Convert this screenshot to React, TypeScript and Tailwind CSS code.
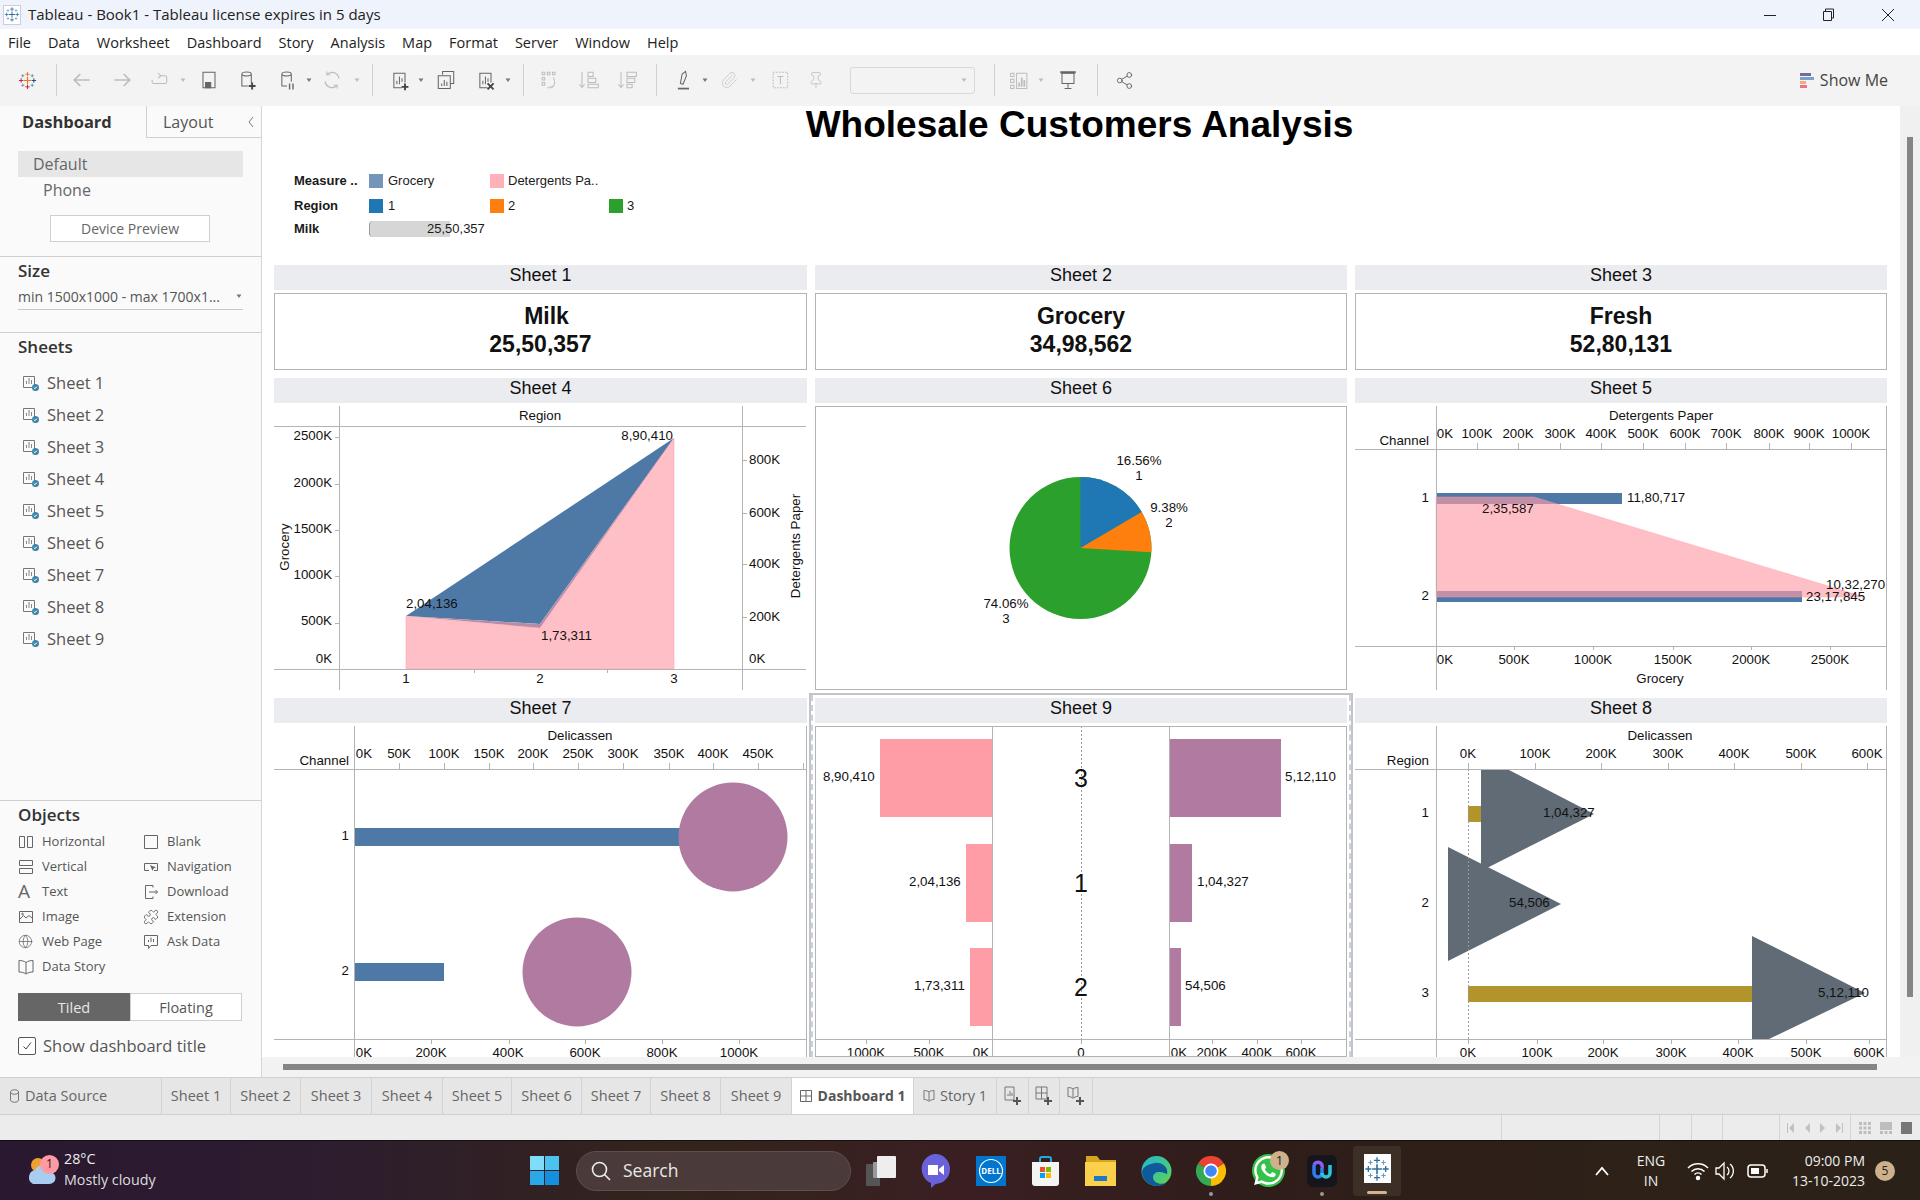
import { ReactNode } from "react";
import { Globe, Paperclip, Pin, Puzzle, Share2 } from "lucide-react";
import { FaWhatsapp } from "react-icons/fa";

const menuItems = ["File", "Data", "Worksheet", "Dashboard", "Story", "Analysis", "Map", "Format", "Server", "Window", "Help"];
const sheetNames = ["Sheet 1", "Sheet 2", "Sheet 3", "Sheet 4", "Sheet 5", "Sheet 6", "Sheet 7", "Sheet 8", "Sheet 9"];
const tabWidths = ["w-[69px]", "w-[70px]", "w-[71px]", "w-[71px]", "w-[69px]", "w-[70px]", "w-[69px]", "w-[70px]", "w-[71px]"];

function Plus({ x, y, r, c, w = 1 }: { x: number; y: number; r: number; c: string; w?: number }) {
  return <path d={`M${x - r} ${y}H${x + r}M${x} ${y - r}V${y + r}`} stroke={c} strokeWidth={w} fill="none" />;
}

function TableauMark({ size, colors }: { size: number; colors: string[] }) {
  return (
    <svg width={size} height={size} viewBox="0 0 24 24">
      <Plus x={12} y={12} r={4.5} c={colors[0]} w={1.5} />
      <Plus x={12} y={4} r={2.8} c={colors[1]} w={1.2} />
      <Plus x={12} y={20} r={2.8} c={colors[2]} w={1.2} />
      <Plus x={4} y={12} r={2.8} c={colors[3]} w={1.2} />
      <Plus x={20} y={12} r={2.8} c={colors[4]} w={1.2} />
      <Plus x={6} y={6} r={2} c={colors[5]} />
      <Plus x={18} y={6} r={2} c={colors[5]} />
      <Plus x={6} y={18} r={2} c={colors[5]} />
      <Plus x={18} y={18} r={2} c={colors[5]} />
    </svg>
  );
}

// toolbar icons, drawn on a 24 grid and shown a bit smaller
const on = "#666";
const off = "#bdbdbd";

function Ico({ children, ml, stroke = on }: { children: ReactNode; ml: string; stroke?: string }) {
  return (
    <svg className={`shrink-0 ${ml}`} width="24" height="24" viewBox="-2 -2 28 28" fill="none" stroke={stroke} strokeWidth="1.2">
      {children}
    </svg>
  );
}

function Caret({ ml, light }: { ml: string; light?: boolean }) {
  return (
    <svg className={`shrink-0 ${ml}`} width="8" height="8" viewBox="0 0 8 8">
      <path d="M1.5 2.5h5L4 6z" fill={light ? "#bdbdbd" : "#777"} />
    </svg>
  );
}

function Sep({ ml }: { ml: string }) {
  return <div className={`h-[32px] w-px shrink-0 bg-[#cfcfcf] ${ml}`} />;
}

function BarsDoc() {
  return (
    <>
      <path d="M19 15V4H6v17h9" />
      <path d="M9.5 17v-4M12.5 17V8M15.5 14V10" />
    </>
  );
}

function Toolbar() {
  return (
    <div className="flex h-[51px] shrink-0 items-center bg-[#f3f3f3] pb-[1px] pl-[15px] pr-[32px]">
      <div className="flex w-[24px] shrink-0 justify-center">
        <TableauMark size={19} colors={["#e8762c", "#e8762c", "#c72035", "#c72035", "#1f457e", "#5b879b"]} />
      </div>
      <Sep ml="ml-[17px]" />
      <Ico ml="ml-[13px]" stroke={off}><path strokeWidth="2" d="M21 12H4M10 5l-7 7 7 7" /></Ico>
      <Ico ml="ml-[16px]" stroke={off}><path strokeWidth="2" d="M3 12h17M14 5l7 7-7 7" /></Ico>
      <Ico ml="ml-[13px]" stroke={off}><path d="M14 7h5a2 2 0 0 1 2 2v5a2 2 0 0 1-2 2H6a2 2 0 0 1-2-2v-2" /><path d="M11 4l3 3-3 3" /></Ico>
      <Caret ml="ml-[8px]" light />
      <Ico ml="ml-[10px]"><path d="M5 3h14v18H5z" /><path d="M8 15h6v6H8z" fill="#666" /></Ico>
      <Ico ml="ml-[14px]"><path d="M6 5c0-3 11-3 11 0v11M6 5v14h7M6 5c0 3 11 3 11 0" /><path strokeWidth="2.2" stroke="#444" d="M14 19h8M18 15v8" /></Ico>
      <Ico ml="ml-[16px]"><path d="M6 5c0-3 11-3 11 0v9M6 5v14h6M6 5c0 3 11 3 11 0" /><path strokeWidth="1.6" d="M15 16v7M19 16v7" /></Ico>
      <Caret ml="ml-[6px]" />
      <Ico ml="ml-[7px]" stroke={off}><path d="M20 10a8 8 0 0 0-14-4M4 14a8 8 0 0 0 14 4" strokeWidth="1.5" /><path d="M6 2v4h4M18 22v-4h-4" /></Ico>
      <Caret ml="ml-[9px]" light />
      <Sep ml="ml-[11px]" />
      <Ico ml="ml-[14px]"><BarsDoc /><path strokeWidth="2.2" stroke="#444" d="M15 20h8M19 16v8" /></Ico>
      <Caret ml="ml-[6px]" />
      <Ico ml="ml-[9px]"><path d="M8 6V2h13v14h-4" /><path d="M3 7h14v15H3z" /><path d="M7 19v-3M10 19v-7M13 19v-5" /></Ico>
      <Ico ml="ml-[15px]"><BarsDoc /><path strokeWidth="2.2" stroke="#444" d="M15 16l7 7M22 16l-7 7" /></Ico>
      <Caret ml="ml-[7px]" />
      <Sep ml="ml-[11px]" />
      <Ico ml="ml-[13px]" stroke={off}><path d="M4 3h3v3H4zM10 3h3v3h-3zM16 3h3v3h-3zM4 9h3v3H4zM4 15h3v3H4zM10 21h3M17 9c3 5 2 9-2 12M13 19l2 2 2-2" /></Ico>
      <Ico ml="ml-[15px]" stroke={off}><path d="M5 3v17M2 17l3 4 3-4M12 3h6v5h-6zM12 10h9v5h-9zM12 17h12v4H12z" /></Ico>
      <Ico ml="ml-[15px]" stroke={off}><path d="M5 3v17M2 17l3 4 3-4M12 3h11v5H12zM12 10h9v5h-9zM12 17h6v4h-6z" /></Ico>
      <Sep ml="ml-[17px]" />
      <Ico ml="ml-[14px]"><path d="M9 16l2-11 4-3 1 5-4 10z" /><path d="M6 22h13" strokeWidth="2" /></Ico>
      <Caret ml="ml-[6px]" />
      <div className="ml-[8px] flex w-[24px] shrink-0 justify-center text-[#c9c9c9]"><Paperclip size={18} strokeWidth={1.2} /></div>
      <Caret ml="ml-[8px]" light />
      <Ico ml="ml-[11px]" stroke={off}><path strokeDasharray="2 1.5" d="M4 3h17v18H4z" /><path d="M9 8h7M12.5 8v9" /></Ico>
      <div className="ml-[12px] flex w-[24px] shrink-0 justify-center text-[#c4c4c4]"><Pin size={18} strokeWidth={1.2} /></div>
      <div className="ml-[22px] flex h-[27px] w-[125px] shrink-0 items-center justify-end rounded-[3px] border border-[#d8d8d8] pr-[6px]">
        <Caret ml="ml-0" light />
      </div>
      <Sep ml="ml-[19px]" />
      <Ico ml="ml-[13px]" stroke={off}><path d="M1 4h4v4H1zM1 11h4v4H1zM1 18h4v4H1zM8 4h12v18H8z" /><path strokeWidth="2" d="M11 20v-5M14 20V9M17 20v-8" /></Ico>
      <Caret ml="ml-[5px]" light />
      <Ico ml="ml-[11px]"><path d="M3 3h18" strokeWidth="2.5" /><path d="M5 4h14v12H5zM12 16v5M8 22h8" /></Ico>
      <Sep ml="ml-[17px]" />
      <div className="ml-[14px] flex w-[24px] shrink-0 justify-center text-[#666]"><Share2 size={19} strokeWidth={1.2} /></div>
      <div className="ml-auto flex items-center gap-[6px]">
        <div className="flex flex-col gap-px">
          <div className="h-[3px] w-[11px] bg-[#7a6a9b]" />
          <div className="h-[3px] w-[14px] bg-[#7aa3cc]" />
          <div className="h-[3px] w-[6px] bg-[#f5a97f]" />
          <div className="h-[3px] w-[7px] bg-[#f0708a]" />
        </div>
        <span className="text-[16px] text-[#444]">Show Me</span>
      </div>
    </div>
  );
}

function SheetIcon() {
  return (
    <svg width="17" height="18" viewBox="0 0 17 18" fill="none">
      <path d="M.5 2.5h11v11H.5z" stroke="#777" />
      <path d="M3.5 10V7M6 10V4M8.5 10V6" stroke="#888" />
      <circle cx="12.5" cy="13.5" r="3.5" fill="#3f84a8" />
      <path d="M10.8 13.5l1.2 1.2 2-2.2" stroke="#fff" />
    </svg>
  );
}

const objStroke = "#666";

function Obj({ icon, label }: { icon: ReactNode; label: string }) {
  return (
    <div className="flex h-[25px] items-center">
      <div className="w-[24px] shrink-0 text-[#666]">{icon}</div>
      <span className="text-[13px] text-[#555]">{label}</span>
    </div>
  );
}

function ObjSvg({ children }: { children: ReactNode }) {
  return (
    <svg width="16" height="16" viewBox="0 0 16 16" fill="none" stroke={objStroke}>
      {children}
    </svg>
  );
}

function Sidebar() {
  return (
    <div className="flex w-[262px] shrink-0 flex-col border-r border-[#d6d6d6] bg-[#fafafa]">
      <div className="flex h-[32px] shrink-0">
        <div className="flex w-[146px] items-center pl-[22px] text-[16.5px] font-bold text-[#333]">Dashboard</div>
        <div className="flex flex-1 items-center justify-between border-b border-l border-[#d0d0d0] pl-[16px] pr-[6px] text-[16px] text-[#555]">
          <span>Layout</span>
          <svg width="8" height="12" viewBox="0 0 8 12" fill="none" stroke="#777"><path d="M6 1L2 6l4 5" /></svg>
        </div>
      </div>
      <div className="mx-[18px] mt-[13px] flex h-[26px] w-[225px] items-center bg-[#e6e6e6] pl-[15px] text-[16px] text-[#666]">Default</div>
      <div className="flex h-[26px] items-center pl-[43px] text-[16px] text-[#666]">Phone</div>
      <div className="ml-[50px] mt-[12px] flex h-[27px] w-[160px] items-center justify-center border border-[#cfcfcf] bg-white text-[14px] text-[#666]">Device Preview</div>
      <div className="mt-[14px] border-t border-[#d0d0d0]" />
      <div className="flex h-[28px] items-center pl-[18px] text-[17px] font-semibold text-[#333]">Size</div>
      <div className="mx-[18px] flex h-[25px] w-[225px] items-center justify-between border-b border-[#c8c8c8] pb-[2px] text-[14px] text-[#555]">
        <span className="whitespace-nowrap">min 1500x1000 - max 1700x1...</span>
        <Caret ml="ml-0" />
      </div>
      <div className="mt-[22px] border-t border-[#d0d0d0]" />
      <div className="flex h-[28px] items-center pl-[18px] text-[17px] font-semibold text-[#333]">Sheets</div>
      <div className="mt-[6px] flex flex-col">
        {sheetNames.map((name) => (
          <div key={name} className="flex h-[32px] items-center gap-[7px] pl-[23px] text-[16.5px] text-[#555]">
            <SheetIcon />
            <span>{name}</span>
          </div>
        ))}
      </div>
      <div className="mt-auto border-t border-[#d0d0d0]" />
      <div className="flex h-[28px] items-center pl-[18px] text-[17px] font-semibold text-[#333]">Objects</div>
      <div className="grid grid-cols-[125px_1fr] pl-[18px]">
        <Obj label="Horizontal" icon={<ObjSvg><path d="M1.5 2.5h5v11h-5zM9.5 2.5h5v11h-5z" /></ObjSvg>} />
        <Obj label="Blank" icon={<ObjSvg><path d="M1.5 1.5h13v13h-13z" /></ObjSvg>} />
        <Obj label="Vertical" icon={<ObjSvg><path d="M1.5 1.5h13v5h-13zM1.5 9.5h13v5h-13z" /></ObjSvg>} />
        <Obj label="Navigation" icon={<ObjSvg><path d="M11 11.5h3.5v-7h-13v7H6" /><path d="M7 6l6 2.5-2.5 1L9.5 12z" fill="#666" stroke="none" /></ObjSvg>} />
        <Obj label="Text" icon={<span className="block text-[19px] leading-none text-[#666]">A</span>} />
        <Obj label="Download" icon={<ObjSvg><path d="M10 3.5V1.5H2.5v13H10v-2" /><path d="M6 8h8.5M12.5 6l2 2-2 2" /></ObjSvg>} />
        <Obj label="Image" icon={<ObjSvg><path d="M1.5 2.5h13v11h-13z" /><path d="M2 10l3.5-3.5L8 9l3-2.5 3 2.5" /><circle cx="4.5" cy="5" r=".8" /></ObjSvg>} />
        <Obj label="Extension" icon={<Puzzle size={16} strokeWidth={1.3} />} />
        <Obj label="Web Page" icon={<Globe size={15} strokeWidth={1.2} />} />
        <Obj label="Ask Data" icon={<ObjSvg><path d="M1.5 1.5h13v10H8l-2.5 3v-3h-4z" /><path d="M5.5 8V6M8 8V3.5M10.5 8V5" /></ObjSvg>} />
        <Obj label="Data Story" icon={<ObjSvg><path d="M8 3.5C6 2 3.5 1.5 1 1.5v11.5c2.5 0 5 .5 7 2 2-1.5 4.500-2 7-2V1.500c-2.500 0-5 .5-7 2zM8 3.500V15" /></ObjSvg>} />
      </div>
      <div className="ml-[18px] mt-[14px] flex h-[28px] w-[224px] text-[14.5px]">
        <div className="flex w-[112px] items-center justify-center bg-[#666] pt-[1px] text-[#e8e8e8]">Tiled</div>
        <div className="flex flex-1 items-center justify-center border border-[#d0d0d0] bg-white pt-[1px] text-[#555]">Floating</div>
      </div>
      <div className="ml-[18px] mt-[16px] mb-[22px] flex h-[18px] items-center gap-[7px]">
        <div className="flex h-[18px] w-[18px] items-center justify-center rounded-[2px] border border-[#555] bg-white">
          <svg width="10" height="10" viewBox="0 0 10 10" fill="none" stroke="#444"><path d="M1.500 5.500l2.500 2.500 5-6.500" /></svg>
        </div>
        <span className="text-[16.5px] text-[#555]">Show dashboard title</span>
      </div>
    </div>
  );
}

// chart helpers, svg coordinates are page coordinates through the viewBox
function T({ x, y, a = "start", s = 13.3, children }: { x: number; y: number; a?: "start" | "middle" | "end"; s?: number; children: ReactNode }) {
  return (
    <text x={x} y={y - 0.4} textAnchor={a} dominantBaseline="central" fontSize={s} fill="#111">
      {children}
    </text>
  );
}

function VT({ x, y, children }: { x: number; y: number; children: ReactNode }) {
  return (
    <text x={x} y={y} textAnchor="middle" dominantBaseline="central" fontSize={13.3} fill="#111" transform={`rotate(-90 ${x} ${y})`}>
      {children}
    </text>
  );
}

function Line({ d, c = "#b3b3b3", dash }: { d: string; c?: string; dash?: string }) {
  return <path d={d} stroke={c} strokeWidth="1" fill="none" shapeRendering="crispEdges" strokeDasharray={dash} />;
}

function Ticks({ xs, y, len }: { xs: number[]; y: number; len: number }) {
  return <Line d={xs.map((x) => `M${x + 0.5} ${y}v${len}`).join("")} />;
}

function SheetFour() {
  return (
    <svg width="533" height="284" viewBox="274 406 533 284">
      <polygon points="406,616 674,438 540,624" fill="#4e79a7" />
      <polygon points="406,616 540,624 674,438 540,628" fill="#b48ea8" />
      <polygon points="406,669 406,616.500 540,628 674,438 674,669" fill="#ff9da7" fillOpacity="0.65" stroke="#ff9da7" strokeOpacity="0.5" />
      <Line d="M339.500 406V690M742.500 406V690M274 426.500H806M274 669.500H806" />
      <Line d="M335 437.500h4M335 484.500h4M335 530.500h4M335 576.500h4M335 623.500h4M743 460.500h4M743 513.500h4M743 564.500h4M743 617.500h4M474.500 669v4M607.500 669v4" />
      <T x={540} y={416} a="middle">Region</T>
      {[["2500K", 436], ["2000K", 483], ["1500K", 529], ["1000K", 575], ["500K", 621], ["0K", 659]].map(([t, y]) => (
        <T key={t} x={332} y={Number(y)} a="end">{t}</T>
      ))}
      {[["800K", 460], ["600K", 513], ["400K", 564], ["200K", 617], ["0K", 659]].map(([t, y]) => (
        <T key={t} x={749} y={Number(y)}>{t}</T>
      ))}
      <VT x={284} y={547}>Grocery</VT>
      <VT x={795} y={546}>Detergents Paper</VT>
      <T x={673} y={436} a="end">8,90,410</T>
      <T x={406} y={604}>2,04,136</T>
      <T x={541} y={636}>1,73,311</T>
      <T x={406} y={679} a="middle">1</T>
      <T x={540} y={679} a="middle">2</T>
      <T x={674} y={679} a="middle">3</T>
    </svg>
  );
}

function SheetSix() {
  return (
    <svg className="outline -outline-offset-1 outline-[#b3b3b3]" width="532" height="284" viewBox="815 406 532 284">
      <circle cx="1080.500" cy="548" r="71" fill="#2ca02c" />
      <path d="M1080.500 548V477A71 71 0 0 1 1141.700 512z" fill="#1f77b4" />
      <path d="M1080.500 548L1141.700 512A71 71 0 0 1 1151.400 552.200z" fill="#ff7f0e" />
      <T x={1139} y={461} a="middle">16.56%</T>
      <T x={1139} y={476} a="middle">1</T>
      <T x={1169} y={508} a="middle">9.38%</T>
      <T x={1169} y={523} a="middle">2</T>
      <T x={1006} y={604} a="middle">74.06%</T>
      <T x={1006} y={619} a="middle">3</T>
    </svg>
  );
}

function SheetFive() {
  const top: [string, number][] = [["0K", 1445], ["100K", 1477], ["200K", 1518], ["300K", 1560], ["400K", 1601], ["500K", 1643], ["600K", 1685], ["700K", 1726], ["800K", 1769], ["900K", 1809], ["1000K", 1851]];
  const bottom: [string, number][] = [["0K", 1445], ["500K", 1514], ["1000K", 1593], ["1500K", 1673], ["2000K", 1751], ["2500K", 1830]];
  return (
    <svg width="532" height="284" viewBox="1355 406 532 284">
      <rect x="1436" y="493" width="186" height="11" fill="#4e79a7" />
      <rect x="1436" y="591" width="366" height="11" fill="#4e79a7" />
      <polygon points="1436,497 1534,497 1864.500,597 1436,597" fill="#ff9da7" fillOpacity="0.65" stroke="#ff9da7" strokeOpacity="0.4" />
      <Line d="M1436.500 406V690M1886.500 406V690M1355 449.500H1887M1355 646.500H1887" />
      <Ticks xs={top.slice(1).map((t) => t[1])} y={443} len={6} />
      <Ticks xs={bottom.slice(1).map((t) => t[1])} y={646} len={4} />
      <T x={1661} y={416} a="middle">Detergents Paper</T>
      <T x={1429} y={441} a="end">Channel</T>
      {top.map(([t, x]) => <T key={t} x={x} y={434} a="middle">{t}</T>)}
      {bottom.map(([t, x]) => <T key={t} x={x} y={660} a="middle">{t}</T>)}
      <T x={1429} y={498} a="end">1</T>
      <T x={1429} y={596} a="end">2</T>
      <T x={1627} y={498}>11,80,717</T>
      <T x={1482} y={509}>2,35,587</T>
      <T x={1826} y={585}>10,32,270</T>
      <T x={1806} y={597}>23,17,845</T>
      <T x={1660} y={679} a="middle">Grocery</T>
    </svg>
  );
}

function SheetSeven() {
  const top: [string, number][] = [["0K", 364], ["50K", 399], ["100K", 444], ["150K", 489], ["200K", 533], ["250K", 578], ["300K", 623], ["350K", 669], ["400K", 713], ["450K", 758]];
  const bottom: [string, number][] = [["0K", 364], ["200K", 431], ["400K", 508], ["600K", 585], ["800K", 662], ["1000K", 739]];
  return (
    <svg width="533" height="331" viewBox="274 726 533 331">
      <rect x="354" y="828" width="326" height="18" fill="#4e79a7" />
      <rect x="354" y="963" width="90" height="18" fill="#4e79a7" />
      <circle cx="733" cy="837" r="54.500" fill="#b07aa1" />
      <circle cx="577" cy="972" r="54.500" fill="#b07aa1" />
      <Line d="M354.500 726V1057M806.500 726V1057M274 769.500H807M274 1039.500H807" />
      <Ticks xs={[399, 444, 489, 533, 578, 623, 669, 713, 758, 803]} y={763} len={6} />
      <Ticks xs={[431, 509, 585, 662, 739]} y={1039} len={5} />
      <T x={580} y={736} a="middle">Delicassen</T>
      <T x={349} y={761} a="end">Channel</T>
      {top.map(([t, x]) => <T key={t} x={x} y={754} a="middle">{t}</T>)}
      {bottom.map(([t, x]) => <T key={t} x={x} y={1053} a="middle">{t}</T>)}
      <T x={349} y={836} a="end">1</T>
      <T x={349} y={971} a="end">2</T>
    </svg>
  );
}

function SheetNine() {
  const bottom: [string, number][] = [["1000K", 866], ["500K", 929], ["0K", 981], ["0", 1081], ["0K ", 1179], ["200K", 1212], ["400K", 1257], ["600K", 1301]];
  return (
    <svg className="outline -outline-offset-1 outline-[#b3b3b3]" width="532" height="331" viewBox="815 726 532 331">
      <rect x="880" y="739" width="112" height="78" fill="#ff9da7" />
      <rect x="966" y="844" width="26" height="78" fill="#ff9da7" />
      <rect x="970" y="948" width="22" height="78" fill="#ff9da7" />
      <rect x="1170" y="739" width="111" height="78" fill="#b07aa1" />
      <rect x="1170" y="844" width="22" height="78" fill="#b07aa1" />
      <rect x="1170" y="948" width="11" height="78" fill="#b07aa1" />
      <Line d="M992.500 726V1057M1169.500 726V1057M815 1039.500H1347" />
      <Line d="M1081.500 726V1039" c="#999" dash="2 2" />
      <Ticks xs={[866, 929, 1081, 1212, 1257, 1301]} y={1039} len={5} />
      <T x={823} y={777}>8,90,410</T>
      <T x={1285} y={777}>5,12,110</T>
      <T x={909} y={882}>2,04,136</T>
      <T x={1197} y={882}>1,04,327</T>
      <T x={914} y={986}>1,73,311</T>
      <T x={1185} y={986}>54,506</T>
      <T x={1081} y={778} a="middle" s={25}>3</T>
      <T x={1081} y={883} a="middle" s={25}>1</T>
      <T x={1081} y={987} a="middle" s={25}>2</T>
      {bottom.map(([t, x]) => <T key={t} x={x} y={1053} a="middle">{t}</T>)}
    </svg>
  );
}

function SheetEight() {
  const top: [string, number][] = [["0K", 1468], ["100K", 1535], ["200K", 1601], ["300K", 1668], ["400K", 1734], ["500K", 1801], ["600K", 1867]];
  const bottom: [string, number][] = [["0K", 1468], ["100K", 1537], ["200K", 1603], ["300K", 1671], ["400K", 1738], ["500K", 1806], ["600K", 1869]];
  return (
    <svg width="532" height="331" viewBox="1355 726 532 331">
      <rect x="1468" y="806" width="14" height="16" fill="#b1952c" />
      <rect x="1468" y="986" width="285" height="16" fill="#b1952c" />
      <polygon points="1481,769 1507,769 1594,814 1481,871" fill="#606b75" />
      <polygon points="1448,847 1561,904 1448,961" fill="#606b75" />
      <polygon points="1752,936 1865,993 1769,1039 1752,1039" fill="#606b75" />
      <Line d="M1468.500 769V1039" c="#999" dash="2 2" />
      <Line d="M1436.500 726V1057M1886.500 726V1057M1355 769.500H1887M1355 1039.500H1887" />
      <Ticks xs={top.map((t) => t[1])} y={763} len={6} />
      <Ticks xs={bottom.map((t) => t[1])} y={1039} len={5} />
      <T x={1660} y={736} a="middle">Delicassen</T>
      <T x={1429} y={761} a="end">Region</T>
      {top.map(([t, x]) => <T key={t} x={x} y={754} a="middle">{t}</T>)}
      {bottom.map(([t, x]) => <T key={t} x={x} y={1053} a="middle">{t}</T>)}
      <T x={1429} y={813} a="end">1</T>
      <T x={1429} y={903} a="end">2</T>
      <T x={1429} y={993} a="end">3</T>
      <T x={1543} y={813}>1,04,327</T>
      <T x={1509} y={903}>54,506</T>
      <T x={1818} y={993}>5,12,110</T>
    </svg>
  );
}

function SheetBox({ title, children }: { title: string; children: ReactNode }) {
  return (
    <div className="relative flex min-w-0 flex-col gap-[3px]">
      <div className="flex h-[25px] items-center justify-center bg-[#ebecf0] pb-[5px] text-[18px] text-[#111]">{title}</div>
      {children}
    </div>
  );
}

function Kpi({ name, value, shift }: { name: string; value: string; shift?: string }) {
  return (
    <div className="flex h-[77px] flex-col items-center justify-center border border-[#b3b3b3] pb-[3px] text-[23px] font-bold leading-[28px] text-[#111]">
      <div className={shift}>{name}</div>
      <div>{value}</div>
    </div>
  );
}

function Legend() {
  return (
    <div className="mt-[25px] flex flex-col pl-[20px] text-[13px] text-[#1a1a1a]">
      <div className="flex h-[24px] items-center">
        <div className="w-[75px] font-bold">Measure ..</div>
        <div className="flex w-[121px] items-center gap-[5px]"><div className="h-[14px] w-[14px] bg-[#7594b9]" />Grocery</div>
        <div className="flex items-center gap-[4px]"><div className="h-[14px] w-[14px] bg-[#ffb1ba]" />Detergents Pa..</div>
      </div>
      <div className="flex h-[24px] items-center pt-[1px]">
        <div className="w-[75px] font-bold">Region</div>
        <div className="flex w-[121px] items-center gap-[5px]"><div className="h-[14px] w-[14px] bg-[#1f77b4]" />1</div>
        <div className="flex w-[119px] items-center gap-[4px]"><div className="h-[14px] w-[14px] bg-[#ff7f0e]" />2</div>
        <div className="flex items-center gap-[4px]"><div className="h-[14px] w-[14px] bg-[#2ca02c]" />3</div>
      </div>
      <div className="flex h-[24px] items-center">
        <div className="w-[75px] font-bold">Milk</div>
        <div className="relative flex h-[16px] w-[81px] items-center rounded-l-[4px] border-l border-[#999] bg-[#d6d6d6]">
          <span className="absolute left-[57px] whitespace-nowrap">25,50,357</span>
        </div>
      </div>
    </div>
  );
}

function Canvas() {
  return (
    <div className="min-w-0 flex-1 overflow-hidden bg-white pl-[12px] pr-[13px] font-['Liberation_Sans',Arial,sans-serif]">
      <div className="flex h-[38px] items-center justify-center pb-[1px] pr-[2px] text-[37px] font-bold leading-none text-black">Wholesale Customers Analysis</div>
      <Legend />
      <div className="mt-[24px] grid grid-cols-[533px_532px_532px] gap-x-[8px] gap-y-[8px]">
        <SheetBox title="Sheet 1"><Kpi name="Milk" value="25,50,357" shift="pl-[12px]" /></SheetBox>
        <SheetBox title="Sheet 2"><Kpi name="Grocery" value="34,98,562" /></SheetBox>
        <SheetBox title="Sheet 3"><Kpi name="Fresh" value="52,80,131" /></SheetBox>
        <SheetBox title="Sheet 4"><SheetFour /></SheetBox>
        <SheetBox title="Sheet 6"><SheetSix /></SheetBox>
        <SheetBox title="Sheet 5"><SheetFive /></SheetBox>
        <SheetBox title="Sheet 7"><SheetSeven /></SheetBox>
        <SheetBox title="Sheet 9">
          <SheetNine />
          {/* selection frame round the active sheet */}
          <div className="pointer-events-none absolute -left-[6px] -right-[6px] -top-[5px] bottom-0 border-x-2 border-t-2 border-[#c4c4c4]">
            <div className="absolute inset-y-0 left-0 w-[2px] border-l-2 border-dashed border-[#c5d2e6]" />
            <div className="absolute inset-y-0 right-0 w-[2px] border-r-2 border-dashed border-[#c5d2e6]" />
          </div>
        </SheetBox>
        <SheetBox title="Sheet 8"><SheetEight /></SheetBox>
      </div>
    </div>
  );
}

function Tabs() {
  const tab = "flex h-full shrink-0 items-center justify-center border-r border-[#d2d2d2]";
  return (
    <div className="flex h-[38px] shrink-0 border-y border-[#d0d0d0] bg-[#e6e6e6] text-[14.5px] text-[#666]">
      <div className={`${tab} w-[162px] justify-start gap-[6px] pl-[10px]`}>
        <svg width="9" height="14" viewBox="0 0 9 14" fill="none" stroke="#777"><path d="M.5 3c0-3 8-3 8 0v8c0 3-8 3-8 0zM.5 3c0 3 8 3 8 0" /></svg>
        <span>Data Source</span>
      </div>
      {sheetNames.map((name, i) => (
        <div key={name} className={`${tab} ${tabWidths[i]}`}>{name}</div>
      ))}
      <div className={`${tab} w-[122px] gap-[6px] bg-white pb-[1px] font-bold text-[#555]`}>
        <svg width="12" height="12" viewBox="0 0 12 12" fill="none" stroke="#666"><path d="M.5.5h11v11H.5zM.5 6h11M6 .5V11.500" /></svg>
        <span className="text-[14px]">Dashboard 1</span>
      </div>
      <div className={`${tab} w-[83px] gap-[5px]`}>
        <svg width="12" height="14" viewBox="0 0 12 14" fill="none" stroke="#777"><path d="M1 1.500c2 0 4 .5 5 1.500 1-1 3-1.500 5-1.500v9c-2 0-4 .5-5 2-1-1.500-3-2-5-2zM6 3v9" /></svg>
        <span>Story 1</span>
      </div>
      {[
        ["w-[32px]", "M1 1h9v13H1zM4 10V8M6 10V5M8 10V7"],
        ["w-[31px]", "M1 1h11v12H1zM1 7h11M6.500 1v12"],
        ["w-[33px]", "M1 1.500c2 0 4 .5 5 1.500 1-1 3-1.500 5-1.500v9c-2 0-4 .5-5 2-1-1.500-3-2-5-2zM6 3v9"],
      ].map(([w, d]) => (
        <div key={w} className={`${tab} ${w}`}>
          <svg width="18" height="20" viewBox="0 0 18 20" fill="none" stroke="#777">
            <path d={d} />
            <path d="M9 15h8M13 11v8" stroke="#555" strokeWidth="2" />
          </svg>
        </div>
      ))}
    </div>
  );
}

function StatusBar() {
  return (
    <div className="flex h-[25px] shrink-0 bg-[#ececec]">
      <div className="w-[1501px]" />
      <div className="w-[158px] border-l border-[#d4d4d4]" />
      <div className="w-[32px] border-l border-[#d4d4d4]" />
      <div className="w-[31px] border-l border-[#d4d4d4]" />
      <div className="w-[57px] border-l border-[#d4d4d4]" />
      <div className="flex w-[71px] items-center gap-[8px] border-l border-[#d4d4d4] pl-[7px]">
        <svg width="8" height="10" viewBox="0 0 8 10" fill="#c0c0c0"><path d="M0 0h1v10H0zM7 0v10L2 5z" /></svg>
        <svg width="8" height="10" viewBox="0 0 8 10" fill="#c0c0c0"><path d="M7 0v10L2 5z" /></svg>
        <svg width="8" height="10" viewBox="0 0 8 10" fill="#c0c0c0"><path d="M1 0v10l5-5z" /></svg>
        <svg width="8" height="10" viewBox="0 0 8 10" fill="#c0c0c0"><path d="M7 0h1v10H7zM1 0v10l5-5z" /></svg>
      </div>
      <div className="flex flex-1 items-center gap-[9px] border-l border-[#d4d4d4] pl-[8px]">
        <svg width="12" height="12" viewBox="0 0 12 12" fill="#bdbdbd"><path d="M0 0h3v3H0zM4.500 0h3v3h-3zM9 0h3v3H9zM0 4.500h3v3H0zM4.500 4.500h3v3h-3zM9 4.500h3v3H9zM0 9h3v3H0zM4.500 9h3v3h-3zM9 9h3v3H9z" /></svg>
        <svg width="12" height="12" viewBox="0 0 12 12" fill="#bdbdbd"><path d="M0 0h12v8H0zM0 9h3v3H0zM4.500 9h3v3h-3zM9 9h3v3H9z" /></svg>
        <div className="h-[12px] w-[11px] bg-[#777]" />
      </div>
    </div>
  );
}

function Taskbar() {
  return (
    <div className="flex h-[60px] shrink-0 items-center border-t border-[#111] bg-[linear-gradient(90deg,#2a1830_0%,#2d1c30_15%,#33241c_35%,#3a1f22_50%,#2f1d1a_65%,#2d2118_85%,#2a2118_100%)] text-[#ededed]">
      <div className="flex w-[530px] shrink-0 items-center pl-[25px]">
        <div className="relative h-[32px] w-[32px]">
          <svg width="32" height="32" viewBox="0 0 32 32">
            <circle cx="13" cy="10" r="7" fill="#f0a030" />
            <path d="M8 29h16a6 6 0 0 0 1-12 8 8 0 0 0-15-2 7.500 7.500 0 0 0-2 14z" fill="#a9cdf0" />
          </svg>
          <div className="absolute -right-[2px] top-0 flex h-[19px] w-[19px] items-center justify-center rounded-full bg-[#ff9aa2] text-[12px] text-[#222]">1</div>
        </div>
        <div className="mb-[3px] ml-[7px] flex flex-col text-[14.300px] leading-[21px]">
          <span>28°C</span>
          <span className="text-[#ddd]">Mostly cloudy</span>
        </div>
      </div>
      <div className="grid h-[29px] w-[29px] shrink-0 grid-cols-2 gap-px">
        <div className="bg-[#7fdcfb]" />
        <div className="bg-[#4cc2f1]" />
        <div className="bg-[#2ba8e8]" />
        <div className="bg-[#1490df]" />
      </div>
      <div className="ml-[17px] flex h-[40px] w-[275px] shrink-0 items-center gap-[12px] rounded-full border border-[#5e4e4e] bg-[#4a3a3a] pl-[14px] text-[17.500px] text-[#e8e8e8]">
        <svg width="20" height="20" viewBox="0 0 20 20" fill="none" stroke="#eee" strokeWidth="1.6"><circle cx="8.500" cy="8.500" r="7" /><path d="M13.500 13.500l5.500 5.500" /></svg>
        <span>Search</span>
      </div>
      <svg className="ml-[15px] shrink-0" width="30" height="30" viewBox="0 0 30 30">
        <rect x="0" y="8" width="14" height="22" rx="1" fill="#555" />
        <rect x="7" y="6" width="14" height="16" rx="1" fill="#999" />
        <rect x="11" y="0" width="19" height="22" rx="1" fill="#eee" />
      </svg>
      <svg className="ml-[25px] shrink-0" width="29" height="34" viewBox="0 0 29 34">
        <path d="M14.500 0a14.500 15 0 0 1 0 30L10 34v-5A14.500 15 0 0 1 14.500 0z" fill="#6a62d8" />
        <path d="M7 11h10v10H7zM18 15l5-4v10l-5-4z" fill="#fff" />
      </svg>
      <svg className="ml-[26px] shrink-0" width="30" height="30" viewBox="0 0 30 30">
        <rect width="30" height="30" fill="#0076ce" />
        <circle cx="15" cy="15" r="11.500" fill="none" stroke="#fff" strokeWidth="1.200" />
        <text x="15" y="18" textAnchor="middle" fontSize="8" fontWeight="700" fill="#fff">DELL</text>
      </svg>
      <svg className="ml-[25px] shrink-0" width="29" height="30" viewBox="0 0 29 30">
        <path d="M9 6V3a2 2 0 0 1 2-2h7a2 2 0 0 1 2 2v3" stroke="#23a8e8" strokeWidth="2" fill="none" />
        <path d="M1 6h27v21a3 3 0 0 1-3 3H4a3 3 0 0 1-3-3z" fill="#f4f4f4" />
        <path d="M9 11h5v5H9z" fill="#f25022" />
        <path d="M15 11h5v5h-5z" fill="#7fba00" />
        <path d="M9 17h5v5H9z" fill="#00a4ef" />
        <path d="M15 17h5v5h-5z" fill="#ffb900" />
      </svg>
      <svg className="ml-[25px] shrink-0" width="31" height="30" viewBox="0 0 31 30">
        <path d="M1 0h11l3 4h16v8H1z" fill="#d9a520" />
        <path d="M0 6h31v24H0z" fill="#fbd04a" />
        <path d="M9 20h13v5H9z" fill="#1d78c9" />
      </svg>
      <svg className="ml-[25px] shrink-0" width="31" height="30" viewBox="0 0 31 30">
        <defs>
          <linearGradient id="edgeA" x1="0" y1="0" x2="1" y2="1">
            <stop offset="0" stopColor="#1fb6d8" />
            <stop offset="1" stopColor="#62d44a" />
          </linearGradient>
        </defs>
        <circle cx="15.500" cy="15" r="15" fill="url(#edgeA)" />
        <path d="M1 17C2 26 10 30 16 30c4 0 7-1 9-3-6 2-13 0-13-6 0-3 3-5 6-5 5 0 7 2 8 2 2-7-6-12-12-11C7 8 1 11 1 17z" fill="#105a9c" />
      </svg>
      <div className="relative ml-[24px] shrink-0">
        <svg width="30" height="30" viewBox="0 0 30 30">
          <path d="M15 15L2 7.500A15 15 0 0 1 28 7.500z" fill="#ea4335" />
          <path d="M15 15L28 7.500A15 15 0 0 1 15 30z" fill="#fbbc04" />
          <path d="M15 15L15 30A15 15 0 0 1 2 7.500z" fill="#34a853" />
          <circle cx="15" cy="15" r="7.500" fill="#fff" />
          <circle cx="15" cy="15" r="5.800" fill="#4285f4" />
        </svg>
        <div className="absolute -bottom-[10px] left-[13px] h-[4px] w-[4px] rounded-full bg-[#999]" />
      </div>
      <div className="relative ml-[26px] flex h-[33px] w-[33px] shrink-0 items-center justify-center rounded-full bg-[#35c24b] text-white">
        <FaWhatsapp size={33} />
        <div className="absolute -right-[4px] -top-[3px] flex h-[19px] w-[19px] items-center justify-center rounded-full bg-[#cdb08c] text-[13px] text-[#222]">1</div>
      </div>
      <div className="relative ml-[22px] shrink-0">
        <svg width="30" height="32" viewBox="0 0 30 32" fill="none" strokeWidth="3.500">
          <rect width="30" height="32" rx="6" fill="#15151c" />
          <path d="M7 10v8a4 4 0 0 0 8 0v-5" stroke="#2f7df0" />
          <path d="M15 18a4 4 0 0 0 8 0v-8" stroke="#2ec4d6" />
          <path d="M7 10a4 4 0 0 1 8 3" stroke="#8b5cf6" />
        </svg>
        <div className="absolute -bottom-[9px] left-[13px] h-[4px] w-[4px] rounded-full bg-[#999]" />
      </div>
      <div className="relative ml-[16px] flex h-[50px] w-[48px] shrink-0 items-center justify-center rounded-[4px] bg-[#3c3026]">
        <div className="mb-[4px] flex h-[29px] w-[27px] items-center justify-center bg-white">
          <TableauMark size={26} colors={["#2f6f9f", "#2f6f9f", "#2f6f9f", "#2f6f9f", "#2f6f9f", "#6a9cbc"]} />
        </div>
        <div className="absolute bottom-[2px] h-[3px] w-[20px] rounded-full bg-[#d4b48c]" />
      </div>
      <svg className="ml-[193px] shrink-0" width="16" height="10" viewBox="0 0 16 10" fill="none" stroke="#fff" strokeWidth="1.800"><path d="M2 9l6-7 6 7" /></svg>
      <div className="ml-[21px] flex w-[40px] shrink-0 flex-col items-center text-[14px] leading-[20px]">
        <span>ENG</span>
        <span>IN</span>
      </div>
      <svg className="ml-[16px] shrink-0" width="22" height="20" viewBox="0 0 22 20" fill="none" stroke="#fff" strokeWidth="1.500">
        <path d="M1 7a14 14 0 0 1 20 0M4.500 10.500a9 9 0 0 1 13 0M7.500 13.500a5 5 0 0 1 7 0" />
        <circle cx="11" cy="17" r="1.500" fill="#fff" />
      </svg>
      <svg className="ml-[6px] shrink-0" width="20" height="20" viewBox="0 0 20 20" fill="none" stroke="#fff" strokeWidth="1.300">
        <path d="M1 7h3l5-5v16l-5-5H1z" />
        <path d="M12 6a5 5 0 0 1 0 8M15 3a9 9 0 0 1 0 14" />
      </svg>
      <svg className="ml-[12px] shrink-0" width="22" height="16" viewBox="0 0 22 16" fill="none" stroke="#fff" strokeWidth="1.500">
        <rect x="1" y="2" width="17" height="12" rx="3" />
        <rect x="4" y="5" width="8" height="6" fill="#fff" stroke="none" />
        <path d="M20 6v4" />
      </svg>
      <div className="ml-[6px] flex w-[90px] shrink-0 flex-col items-end whitespace-nowrap text-[14px] leading-[20px]">
        <span>09:00 PM</span>
        <span>13-10-2023</span>
      </div>
      <div className="ml-[10px] flex h-[20px] w-[20px] shrink-0 items-center justify-center rounded-full bg-[#cdb08c] text-[12px] text-[#222]">5</div>
    </div>
  );
}

export default function App() {
  return (
    <div className="flex h-[1200px] w-[1920px] flex-col overflow-hidden bg-white font-['Open_Sans',sans-serif]">
      <div className="flex h-[29px] shrink-0 items-center bg-[#eff3fb] pl-[3px] text-[15px] text-[#222]">
        <div className="flex h-[20px] w-[18px] items-center justify-center border border-[#ccd] bg-white">
          <TableauMark size={17} colors={["#2f6f9f", "#2f6f9f", "#2f6f9f", "#2f6f9f", "#2f6f9f", "#6a9cbc"]} />
        </div>
        <span className="ml-[7px]">Tableau - Book1 - Tableau license expires in 5 days</span>
        <div className="ml-auto flex items-center gap-[46px] pr-[25px]">
          <svg width="12" height="12" viewBox="0 0 12 12" stroke="#222" fill="none"><path d="M0 6.500h12" /></svg>
          <svg width="13" height="13" viewBox="0 0 13 13" stroke="#222" fill="none"><path d="M1.500 3.500h8v9h-8zM3.500 3.500v-2.500h8v9h-2" /></svg>
          <svg width="14" height="14" viewBox="0 0 14 14" stroke="#222" fill="none"><path d="M1 1l12 12M13 1L1 13" /></svg>
        </div>
      </div>
      <div className="flex h-[26px] shrink-0 items-center gap-[17px] pl-[8px] pt-[2px] text-[14.500px] text-[#222]">
        {menuItems.map((m) => <span key={m}>{m}</span>)}
      </div>
      <Toolbar />
      <div className="flex min-h-0 flex-1">
        <Sidebar />
        <div className="flex min-w-0 flex-1 flex-col">
          <div className="flex min-h-0 flex-1">
            <Canvas />
            <div className="w-[20px] shrink-0 bg-[#f0f0f0] pl-[7px] pt-[31px]">
              <div className="h-[860px] w-[6px] bg-[#858585]" />
            </div>
          </div>
          <div className="h-[20px] shrink-0 bg-[#f2f2f2] pl-[21px] pt-[7px]">
            <div className="h-[6px] w-[1594px] bg-[#858585]" />
          </div>
        </div>
      </div>
      <Tabs />
      <StatusBar />
      <Taskbar />
    </div>
  );
}
